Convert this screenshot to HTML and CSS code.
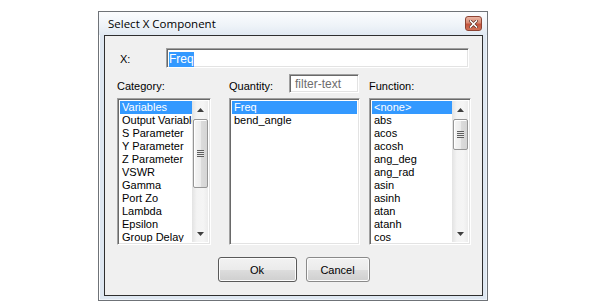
FILE: index.html
```html
<!DOCTYPE html>
<html>
<head>
<meta charset="utf-8">
<link rel="stylesheet" href="styles.css">
</head>
<body>
<div class="dialog">
  <div class="titlebar">
    <span class="title">Select X Component</span>
    <span class="close">
      <svg width="9" height="8" viewBox="0 0 9 8">
        <path d="M1.5 1 L7.5 7 M7.5 1 L1.5 7" stroke="#5a2a20" stroke-width="3" stroke-linecap="square"/>
        <path d="M1.5 1 L7.5 7 M7.5 1 L1.5 7" stroke="#ffffff" stroke-width="1.6" stroke-linecap="square"/>
      </svg>
    </span>
  </div>
  <div class="client">
    <div class="row-x">
      <span class="lbl-x">X:</span>
      <div class="sunken xbox"><span class="xsel">Freq</span></div>
    </div>
    <div class="cols">
      <div class="col col-cat">
        <div class="head"><span class="lbl">Category:</span></div>
        <div class="sunken listbox">
          <div class="items">
            <div class="item selected">Variables</div>
            <div class="item">Output Variables</div>
            <div class="item">S Parameter</div>
            <div class="item">Y Parameter</div>
            <div class="item">Z Parameter</div>
            <div class="item">VSWR</div>
            <div class="item">Gamma</div>
            <div class="item">Port Zo</div>
            <div class="item">Lambda</div>
            <div class="item">Epsilon</div>
            <div class="item">Group Delay</div>
          </div>
          <div class="vscroll">
            <div class="sbtn"><svg width="7" height="4" viewBox="0 0 7 4"><path d="M0 4 L3.5 0 L7 4 Z" fill="#3f3f3f"/></svg></div>
            <div class="track">
              <div class="thumb thumb-cat"><span class="grip"></span></div>
            </div>
            <div class="sbtn"><svg width="7" height="4" viewBox="0 0 7 4"><path d="M0 0 L3.5 4 L7 0 Z" fill="#3f3f3f"/></svg></div>
          </div>
        </div>
      </div>
      <div class="col col-qty">
        <div class="head">
          <span class="lbl">Quantity:</span>
          <div class="sunken filter"><span class="placeholder">filter-text</span></div>
        </div>
        <div class="sunken listbox">
          <div class="items">
            <div class="item selected">Freq</div>
            <div class="item">bend_angle</div>
          </div>
        </div>
      </div>
      <div class="col col-fn">
        <div class="head"><span class="lbl">Function:</span></div>
        <div class="sunken listbox">
          <div class="items">
            <div class="item selected">&lt;none&gt;</div>
            <div class="item">abs</div>
            <div class="item">acos</div>
            <div class="item">acosh</div>
            <div class="item">ang_deg</div>
            <div class="item">ang_rad</div>
            <div class="item">asin</div>
            <div class="item">asinh</div>
            <div class="item">atan</div>
            <div class="item">atanh</div>
            <div class="item">cos</div>
          </div>
          <div class="vscroll">
            <div class="sbtn"><svg width="7" height="4" viewBox="0 0 7 4"><path d="M0 4 L3.5 0 L7 4 Z" fill="#3f3f3f"/></svg></div>
            <div class="track">
              <div class="thumb thumb-fn"><span class="grip"></span></div>
            </div>
            <div class="sbtn"><svg width="7" height="4" viewBox="0 0 7 4"><path d="M0 0 L3.5 4 L7 0 Z" fill="#3f3f3f"/></svg></div>
          </div>
        </div>
      </div>
    </div>
    <div class="buttons">
      <div class="btn btn-default">Ok</div>
      <div class="btn btn-cancel">Cancel</div>
    </div>
  </div>
</div>
</body>
</html>
```

FILE: styles.css
```css
html, body {
  margin: 0;
  padding: 0;
  background: #ffffff;
}
body {
  width: 600px;
  height: 305px;
  overflow: hidden;
  font-family: "Liberation Sans", Arial, sans-serif;
  font-size: 11px;
  color: #000;
}
.dialog {
  box-sizing: border-box;
  margin: 11px 0 0 98px;
  width: 390px;
  height: 290px;
  border: 1px solid #6f7378;
  background: #dee7f1;
  box-shadow: inset 1px 1px 0 #ffffff, inset -1px -1px 0 #eef3f9;
  display: flex;
  flex-direction: column;
}
.titlebar {
  height: 23px;
  flex: none;
  display: flex;
  align-items: flex-start;
  background: linear-gradient(to bottom, #fbfcfe 0%, #eef3f8 60%, #e1e9f2 100%);
}
.title {
  font-family: "Open Sans", "Noto Sans", sans-serif;
  font-size: 11.5px;
  margin: 4px 0 0 9px;
  line-height: 16px;
  color: #000;
}
.close {
  margin: 4px 5px 0 auto;
  box-sizing: border-box;
  width: 17px;
  height: 15px;
  border: 1px solid #8d4333;
  border-radius: 3px;
  background: linear-gradient(to bottom, #eab4a3 0%, #d88a74 45%, #c4533c 55%, #cf7157 100%);
  display: flex;
  align-items: center;
  justify-content: center;
}
.close svg { display: block; }
.client {
  box-sizing: border-box;
  margin: 0 4px 0 5px;
  width: 379px;
  height: 261px;
  flex: none;
  border: 1px solid #2e2e2e;
  background: #f0f0f0;
  display: flex;
  flex-direction: column;
}
.row-x {
  margin-top: 12px;
  padding-left: 15px;
  height: 20px;
  display: flex;
  align-items: center;
}
.lbl-x {
  width: 46px;
  line-height: 13px;
  padding-top: 2px;
}
.sunken {
  box-sizing: border-box;
  background: #ffffff;
  border: 1px solid;
  border-color: #a0a0a0 #ffffff #ffffff #a0a0a0;
  box-shadow: inset 1px 1px 0 #696969, inset -1px -1px 0 #e3e3e3;
}
.xbox {
  width: 303px;
  height: 20px;
  padding: 2px 0 0 2px;
  display: flex;
  align-items: flex-start;
}
.xsel {
  background: #3399ff;
  color: #ffffff;
  font-size: 12px;
  line-height: 15px;
  margin-top: 1px;
}
.cols {
  margin-top: 6px;
  padding-left: 12px;
  display: flex;
}
.col {
  display: flex;
  flex-direction: column;
}
.col-cat { width: 94px; }
.col-qty { width: 131px; margin-left: 18px; }
.col-fn { width: 102px; margin-left: 9px; }
.head {
  height: 19px;
  display: flex;
  align-items: flex-end;
}
.lbl {
  line-height: 13px;
}
.filter {
  margin-left: auto;
  margin-right: 1px;
  width: 70px;
  height: 19px;
  padding: 2px 0 0 5px;
  align-self: flex-start;
}
.placeholder {
  color: #6d6d6d;
  font-size: 12px;
  line-height: 14px;
}
.listbox {
  margin-top: 5px;
  height: 147px;
  padding: 2px;
  display: flex;
  overflow: hidden;
}
.items {
  flex: 1;
  min-width: 0;
  overflow: hidden;
}
.item {
  height: 13px;
  line-height: 13px;
  padding-left: 2px;
  white-space: nowrap;
  overflow: hidden;
}
.item.selected {
  background: #3399ff;
  color: #ffffff;
}
.vscroll {
  width: 16px;
  flex: none;
  display: flex;
  flex-direction: column;
  background: linear-gradient(to right, #e3e3e3 0%, #f3f3f3 30%, #f5f5f5 70%, #ececec 100%);
}
.sbtn {
  height: 17px;
  flex: none;
  display: flex;
  align-items: center;
  justify-content: center;
}
.sbtn svg { display: block; }
.track {
  flex: 1;
  display: flex;
  flex-direction: column;
}
.thumb {
  box-sizing: border-box;
  margin: 1px 0 0 1px;
  width: 15px;
  border: 1px solid #969696;
  border-radius: 2px;
  background: linear-gradient(to right, #f6f6f6 0%, #ececec 50%, #dcdcdc 51%, #d5d5d5 100%);
  box-shadow: inset 1px 1px 0 #ffffff;
  display: flex;
  align-items: center;
  justify-content: center;
}
.thumb-cat { height: 69px; }
.thumb-fn { height: 31px; }
.grip {
  width: 7px;
  height: 7px;
  background: repeating-linear-gradient(to bottom, #5e5e5e 0px, #5e5e5e 1px, #e8e8e8 1px, #e8e8e8 2px);
}
.buttons {
  margin-top: 12px;
  display: flex;
  justify-content: center;
  gap: 9px;
}
.btn {
  box-sizing: border-box;
  height: 25px;
  display: flex;
  align-items: center;
  justify-content: center;
  border: 1px solid #707070;
  border-radius: 3px;
  background: linear-gradient(to bottom, #f2f2f2 0%, #ebebeb 50%, #dddddd 51%, #cfcfcf 100%);
  box-shadow: inset 0 0 0 1px #fcfcfc;
  font-size: 11px;
}
.btn-default { width: 79px; border-color: #5a5a5a; }
.btn-cancel { width: 64px; border-color: #8a8a8a; }
```
